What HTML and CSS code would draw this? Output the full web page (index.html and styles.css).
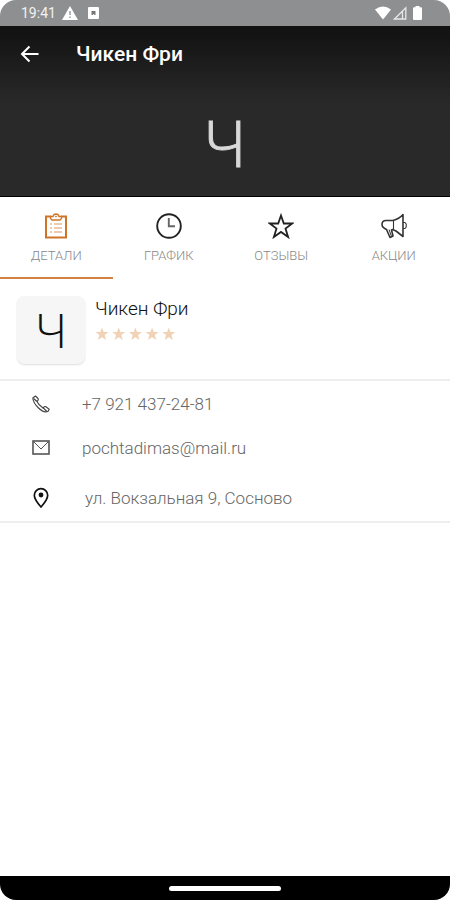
FILE: index.html
```html
<!DOCTYPE html>
<html lang="ru">
<head>
<meta charset="utf-8">
<meta name="viewport" content="width=device-width, initial-scale=1">
<title>Чикен Фри</title>
<link rel="stylesheet" href="styles.css">
</head>
<body>
<div class="screen">
  <div class="status">
    <span class="time">19:41</span>
    <svg width="16" height="14" viewBox="0 0 16 14"><path d="M8 0 16 14H0Z" fill="#fff"/><path d="M8 5v4M8 10.500v1.500" stroke="#8e8f90" stroke-width="1.300"/></svg>
    <svg class="chip" width="11" height="12" viewBox="0 0 11 12"><rect width="11" height="12" rx="1" fill="#fff"/><path d="M3.500 4h4v4H6.500l-1-1-1 1h-1Z" fill="#777"/></svg>
    <span class="signals">
      <svg width="16" height="14" viewBox="0 0 16 14"><path d="M0 3.500Q8-2.500 16 3.500L8 13.500Z" fill="#fff"/></svg>
      <svg width="14" height="14" viewBox="0 0 14 14"><path d="M12.800 1.800V13H1.500ZM9.500 5v8" fill="none" stroke="#e8e8e8" stroke-width="1.300"/></svg>
      <svg class="battery" width="9" height="14" viewBox="0 0 9 14"><path d="M2.500 0h4v1.300H8q1 0 1 1V13q0 1-1 1H1q-1 0-1-1V2.300q0-1 1-1h1.500Z" fill="#fff"/></svg>
    </span>
  </div>
  <header class="hero">
    <div class="bar">
      <button class="back" type="button" aria-label="Назад"><svg width="20" height="18" viewBox="0 0 20 18"><path d="M18.500 9H2M9.500 1.500 2 9l7.500 7.500" fill="none" stroke="#fff" stroke-width="2"/></svg></button>
      <h1 class="title">Чикен Фри</h1>
    </div>
    <div class="initial">Ч</div>
  </header>
  <nav class="tabs">
    <a class="tab active" href="#details">
      <svg width="26" height="26" viewBox="0 0 26 26" fill="none" stroke="#cf7426"><path d="M8 3.500H3v21h20v-21h-5" stroke-width="2"/><path d="M7.500 5.500v-2H10q.5-2.500 3-2.500t3 2.500h2.500v2L17 7H9Z" stroke-width="1.300"/><circle cx="13" cy="3.500" r=".6"/><path d="M7 11h2M11 11h8M7 15h2M11 15h8M7 19h2M11 19h8" stroke-width="1.200" opacity=".75"/></svg>
      <span>ДЕТАЛИ</span>
    </a>
    <a class="tab" href="#schedule">
      <svg width="26" height="26" viewBox="0 0 26 26" fill="none" stroke="#222"><circle cx="13" cy="13" r="11.800" stroke-width="1.900"/><path d="M12.800 5v8.300H19" stroke-width="1.900" stroke="#666"/></svg>
      <span>ГРАФИК</span>
    </a>
    <a class="tab" href="#reviews">
      <svg width="26" height="26" viewBox="0 0 26 26" fill="none" stroke="#222"><path d="m13 2.500 2.800 8h8.500l-6.800 5.100 2.600 8.400-7.100-5.100L5.900 24l2.600-8.400-6.800-5.100h8.500Z" stroke-width="1.800"/></svg>
      <span>ОТЗЫВЫ</span>
    </a>
    <a class="tab" href="#offers">
      <svg width="26" height="26" viewBox="0 0 26 26" fill="none" stroke="#333" stroke-width="1.600" stroke-linejoin="round"><path d="M22 1.500v22L15 18l-3.500-1.500-1 .5 1.500 6-3 1.500-3.500-8Q1 14.500 1 11.500 1 7.500 5 7.500h7Q18 6 22 1.500Z"/><path d="M12.500 7.500v9M22 9.500h2l1.200 1.500v3L24 15.500h-2" stroke-width="1.100"/><path d="m8 16.500 2.500 7" stroke-width="1"/></svg>
      <span>АКЦИИ</span>
    </a>
  </nav>
  <main class="content">
    <section class="profile">
      <div class="avatar">Ч</div>
      <div class="info">
        <h2 class="name">Чикен Фри</h2>
        <div class="stars" role="img" aria-label="Рейтинг">
          <svg width="81" height="14" viewBox="0 0 81 14" fill="#f0d3b6"><defs><path id="star" d="m7 .5 1.700 4.500h4.800L9.700 8l1.400 5L7 10.200 2.900 13l1.400-5L.5 5h4.800Z"/></defs><use href="#star"/><use href="#star" x="16.700"/><use href="#star" x="33.400"/><use href="#star" x="50.100"/><use href="#star" x="66.800"/></svg>
        </div>
      </div>
    </section>
    <address class="contacts">
      <a class="row" href="tel:+79214372481">
        <svg width="18" height="18" viewBox="0 0 18 18" fill="none" stroke="#444" stroke-width="1.100" stroke-linejoin="round"><path d="M3.500 1 6 3.500q.8 1-.3 2.200l-.7.800Q6.500 10 11 13l1.200-1.200q.8-.6 1.700 0l3.300 2.400-1 2Q12 18.500 6.500 13T.8 3Z"/><path d="m1.500 3.500 3.500 3M10.800 12.500l4.200 4"/></svg>
        <span>+7 921 437-24-81</span>
      </a>
      <a class="row" href="mailto:pochtadimas@mail.ru">
        <svg width="18" height="18" viewBox="0 0 18 18" fill="none" stroke="#555"><rect x="1" y="2" width="16" height="13" stroke-width="1.600"/><path d="m1.500 2.500 7.500 7.500 7.500-7.500" stroke-width="1"/></svg>
        <span>pochtadimas@mail.ru</span>
      </a>
      <div class="row place">
        <svg width="18" height="22" viewBox="0 0 18 22"><path d="M9 20Q2.300 12.500 2.300 8.300a6.700 6.700 0 0 1 13.400 0Q15.700 12.500 9 20Z" fill="none" stroke="#111" stroke-width="1.700"/><circle cx="9" cy="8" r="2.400" fill="#111"/></svg>
        <span>ул. Вокзальная 9, Сосново</span>
      </div>
    </address>
  </main>
  <div class="navbar"><span class="handle"></span></div>
</div>
</body>
</html>
```
FILE: styles.css
```css
* { box-sizing: border-box; }
body { margin: 0; background: #fff; font-family: Roboto, sans-serif; }
svg { display: block; flex: none; }
a { color: inherit; text-decoration: none; }
h1, h2 { margin: 0; }
.screen { min-height: 100vh; display: flex; flex-direction: column; border-radius: 16px; overflow: hidden; }
.status { height: 26px; background: #8e8f90; display: flex; align-items: center; padding: 0 28px 0 21px; color: #f2f2f2; }
.time { font-size: 14px; margin-right: 6px; }
.chip { margin-left: 10px; }
.signals { margin-left: auto; display: flex; gap: 2px; }
.battery { margin-left: 4px; }
.hero { background: linear-gradient(#111, #292929 45%); border-bottom: 1px solid #000; padding-bottom: 4px; }
.bar { height: 56px; display: flex; align-items: center; padding: 0 20px; gap: 36px; }
.back { border: 0; background: none; padding: 0; cursor: pointer; }
.title { font-size: 21px; font-weight: 500; line-height: 28px; color: #fff; }
.initial { padding-top: 12px; font-family: "Open Sans", sans-serif; font-weight: 300; font-size: 64px; line-height: 98px; text-align: center; color: #d8d8d8; -webkit-text-stroke: 1px #d8d8d8; }
.tabs { display: grid; grid-template-columns: repeat(4, 1fr); }
.tab { height: 82px; padding-top: 16px; display: flex; flex-direction: column; align-items: center; gap: 8px; font-size: 13px; font-weight: 300; line-height: 18px; color: #888; border-bottom: 2px solid transparent; }
.active { border-bottom-color: #d18144; }
.content { flex: 1; }
.profile { display: flex; gap: 10px; padding: 17px 17px 15px; border-bottom: 2px solid #eee; }
.avatar { width: 68px; height: 68px; border-radius: 8px; background: #f6f6f6; box-shadow: 0 1px 2px #ddd; font-family: "Open Sans", sans-serif; font-weight: 300; font-size: 48px; line-height: 68px; text-align: center; color: #111; }
.name { font-size: 19px; font-weight: 300; line-height: 26px; color: #111; }
.stars { margin-top: 5px; }
.contacts { font-style: normal; border-bottom: 2px solid #eee; padding: 1px 0; }
.row { height: 44px; display: flex; align-items: center; gap: 32px; padding: 0 32px; font-size: 17px; font-weight: 300; color: #666; }
.place { height: 50px; padding-top: 5px; gap: 35px; }
.navbar { height: 24px; background: #000; display: flex; align-items: center; justify-content: center; }
.handle { width: 25%; height: 5px; border-radius: 3px; background: #fff; }
```
